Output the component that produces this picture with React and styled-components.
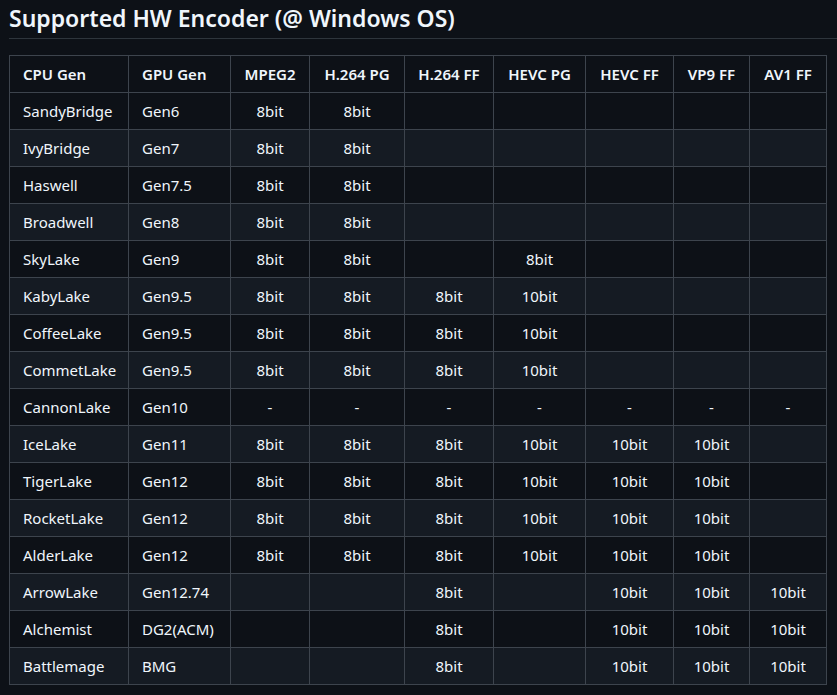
import React from "react";
import styled, { createGlobalStyle } from "styled-components";

const Global = createGlobalStyle`
  html, body { margin: 0; padding: 0; background: #0d1117; }
  body {
    color: #f0f6fc;
    font-family: "Segoe UI", "Noto Sans", Helvetica, Arial, sans-serif;
    font-size: 15px;
    line-height: 24px;
  }
`;

const Page = styled.div`
  padding: 0 0 0 9px;
  min-height: 695px;
  box-sizing: border-box;
`;

const Title = styled.h2`
  margin: 0 0 16px 0;
  padding: 4px 0 5px 0;
  font-size: 23px;
  font-weight: 600;
  line-height: 29px;
  border-bottom: 1px solid #3d444db3;
`;

const Table = styled.table`
  border-collapse: collapse;
  border-spacing: 0;
  table-layout: fixed;
  width: 818px;
`;

const Th = styled.th`
  padding: 6px 13px;
  border: 1px solid #3d444d;
  font-weight: 600;
  text-align: ${(p) => (p.$left ? "left" : "center")};
  white-space: nowrap;
  overflow: hidden;
  height: 24px;
`;

const Td = styled.td`
  padding: 6px 13px;
  border: 1px solid #3d444d;
  text-align: ${(p) => (p.$left ? "left" : "center")};
  white-space: nowrap;
  overflow: hidden;
  height: 24px;
`;

const Row = styled.tr`
  background: #0d1117;
  &:nth-child(2n) { background: #151b23; }
`;

const cols = [
  { name: "CPU Gen", w: 119, left: true },
  { name: "GPU Gen", w: 102, left: true },
  { name: "MPEG2", w: 79 },
  { name: "H.264 PG", w: 95 },
  { name: "H.264 FF", w: 89 },
  { name: "HEVC PG", w: 92 },
  { name: "HEVC FF", w: 88 },
  { name: "VP9 FF", w: 76 },
  { name: "AV1 FF", w: 77 },
];

const rows = [
  ["SandyBridge", "Gen6", "8bit", "8bit", "", "", "", "", ""],
  ["IvyBridge", "Gen7", "8bit", "8bit", "", "", "", "", ""],
  ["Haswell", "Gen7.5", "8bit", "8bit", "", "", "", "", ""],
  ["Broadwell", "Gen8", "8bit", "8bit", "", "", "", "", ""],
  ["SkyLake", "Gen9", "8bit", "8bit", "", "8bit", "", "", ""],
  ["KabyLake", "Gen9.5", "8bit", "8bit", "8bit", "10bit", "", "", ""],
  ["CoffeeLake", "Gen9.5", "8bit", "8bit", "8bit", "10bit", "", "", ""],
  ["CommetLake", "Gen9.5", "8bit", "8bit", "8bit", "10bit", "", "", ""],
  ["CannonLake", "Gen10", "-", "-", "-", "-", "-", "-", "-"],
  ["IceLake", "Gen11", "8bit", "8bit", "8bit", "10bit", "10bit", "10bit", ""],
  ["TigerLake", "Gen12", "8bit", "8bit", "8bit", "10bit", "10bit", "10bit", ""],
  ["RocketLake", "Gen12", "8bit", "8bit", "8bit", "10bit", "10bit", "10bit", ""],
  ["AlderLake", "Gen12", "8bit", "8bit", "8bit", "10bit", "10bit", "10bit", ""],
  ["ArrowLake", "Gen12.74", "", "", "8bit", "", "10bit", "10bit", "10bit"],
  ["Alchemist", "DG2(ACM)", "", "", "8bit", "", "10bit", "10bit", "10bit"],
  ["Battlemage", "BMG", "", "", "8bit", "", "10bit", "10bit", "10bit"],
];

export default function App() {
  return (
    <Page>
      <Global />
      <Title>Supported HW Encoder (@ Windows OS)</Title>
      <Table>
        <colgroup>
          {cols.map((c) => (
            <col key={c.name} style={{ width: c.w }} />
          ))}
        </colgroup>
        <thead>
          <Row>
            {cols.map((c) => (
              <Th key={c.name} $left={c.left}>{c.name}</Th>
            ))}
          </Row>
        </thead>
        <tbody>
          {rows.map((r) => (
            <Row key={r[0]}>
              {r.map((v, i) => (
                <Td key={i} $left={cols[i].left}>{v}</Td>
              ))}
            </Row>
          ))}
        </tbody>
      </Table>
    </Page>
  );
}
